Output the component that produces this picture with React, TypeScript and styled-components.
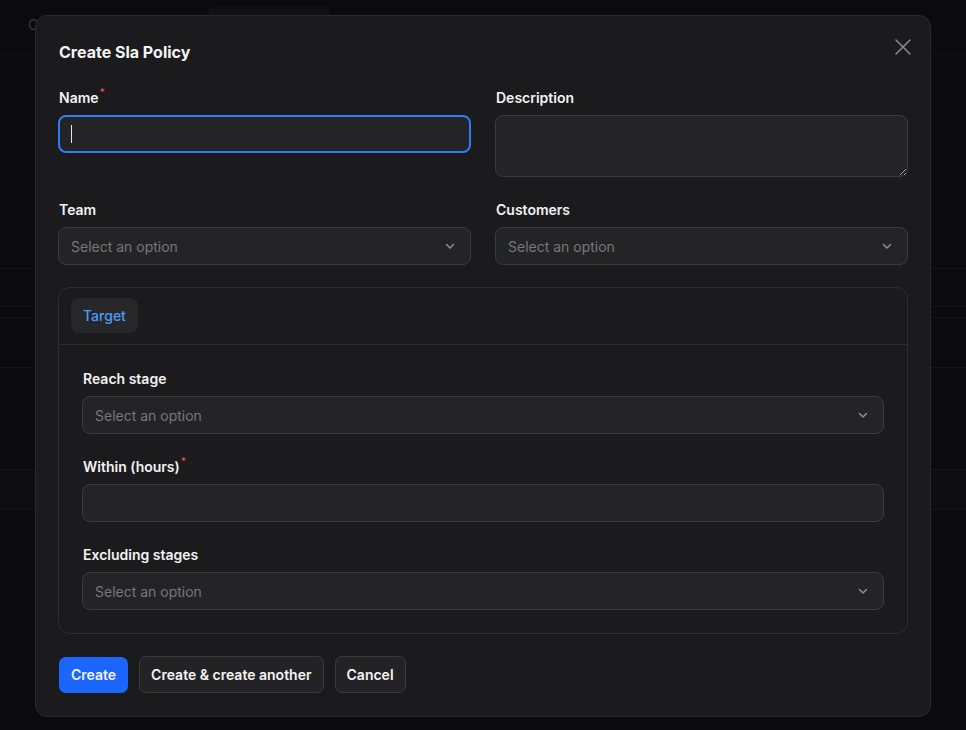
import styled, { createGlobalStyle } from "styled-components";

const GlobalStyle = createGlobalStyle`
    html, body {
        margin: 0;
        padding: 0;
        background: #0b0b0d;
        font-family: Inter, "Noto Sans", "Liberation Sans", sans-serif;
        color: #f2f2f3;
    }
    * {
        box-sizing: border-box;
    }
`;

/* faded page behind the dialog */
const Backdrop = styled.div`
    height: 100vh;
    width: 100%;
    display: flex;
    flex-direction: column;
    overflow: hidden;
`;
const TopBar = styled.div`
    height: 55px;
    display: flex;
    align-items: flex-start;
    gap: 170px;
    padding: 6px 0 0 28px;
    border-bottom: 1px solid #131315;
`;
const Crumb = styled.span`
    margin-top: 10px;
    font-size: 14px;
    color: #3a3a3e;
`;
const Pill = styled.div`
    width: 122px;
    height: 40px;
    border-radius: 8px;
    background: #111113;
`;
const BgRows = styled.div`
    display: flex;
    flex-direction: column;
    padding-top: 203px;
`;
const BgRow = styled.div<{ h: number; tone?: boolean }>`
    height: ${({ h }) => h}px;
    background: ${({ tone }) => (tone ? "#0e0e10" : "transparent")};
    border-bottom: 1px solid #151517;
`;

const Overlay = styled.div`
    position: fixed;
    inset: 0;
    padding-top: 2px;
    display: flex;
    align-items: center;
    justify-content: center;
`;
const Dialog = styled.div`
    width: 896px;
    height: 702px;
    background: #1b1b1d;
    border: 1px solid #2a2a2d;
    border-radius: 12px;
    padding: 24px 22px 23px;
    display: flex;
    flex-direction: column;
`;
const DialogHeader = styled.div`
    display: flex;
    align-items: flex-start;
    justify-content: space-between;
    height: 24px;
    margin-bottom: 24px;
    padding-left: 1px;
`;
const Title = styled.h2`
    margin: 0;
    font-size: 16px;
    line-height: 24px;
    font-weight: 700;
    color: #f4f4f5;
`;
const CloseButton = styled.button`
    border: none;
    background: none;
    padding: 0;
    margin: -4px -6px 0 0;
    width: 22px;
    height: 22px;
    display: flex;
    align-items: center;
    justify-content: center;
    cursor: pointer;
`;
const Grid = styled.div`
    display: grid;
    grid-template-columns: 1fr 1fr;
    column-gap: 24px;
    row-gap: 23px;
`;
const Field = styled.div`
    display: flex;
    flex-direction: column;
`;
const Label = styled.label`
    font-size: 14px;
    line-height: 20px;
    font-weight: 600;
    color: #f2f2f3;
    margin-bottom: 7px;
    padding-left: 1px;
`;
const Required = styled.sup`
    color: #e5484d;
    font-size: 10px;
    line-height: 0;
    margin-left: 1px;
    vertical-align: 7px;
`;
const InputBox = styled.div<{ focused?: boolean }>`
    position: relative;
    height: 38px;
    border-radius: 8px;
    background: #242427;
    border: ${({ focused }) =>
        focused ? "2px solid #2f7cf6" : "1px solid #3b3b3f"};
`;
const Input = styled.input`
    width: 100%;
    height: 100%;
    border: none;
    background: transparent;
    outline: none;
    padding: 0 12px;
    font: inherit;
    font-size: 14px;
    color: #f2f2f3;
`;
const Caret = styled.span`
    position: absolute;
    left: 11px;
    top: 8px;
    width: 1px;
    height: 18px;
    background: #e8e8ea;
`;
const TextArea = styled.textarea`
    height: 62px;
    border-radius: 8px;
    background: #242427;
    border: 1px solid #3b3b3f;
    padding: 8px 12px;
    font: inherit;
    font-size: 14px;
    color: #f2f2f3;
    outline: none;
    resize: vertical;
`;
const Select = styled.div`
    height: 38px;
    border-radius: 8px;
    background: #242427;
    border: 1px solid #3b3b3f;
    padding: 0 12px;
    display: flex;
    align-items: center;
    justify-content: space-between;
    font-size: 14px;
    color: #76767c;
    cursor: pointer;
`;
const TargetCard = styled.div`
    margin-top: 22px;
    border: 1px solid #2e2e31;
    border-radius: 12px;
    display: flex;
    flex-direction: column;
`;
const TabBar = styled.div`
    display: flex;
    padding: 10px 12px 11px;
    border-bottom: 1px solid #2e2e31;
`;
const Tab = styled.button<{ active?: boolean }>`
    height: 35px;
    padding: 0 12px;
    border: none;
    border-radius: 8px;
    background: ${({ active }) => (active ? "#27272a" : "transparent")};
    color: ${({ active }) => (active ? "#4a9bf7" : "#a1a1a8")};
    font: inherit;
    font-size: 14px;
    font-weight: 500;
    cursor: pointer;
`;
const TabBody = styled.div`
    padding: 24px 23px 23px;
    display: flex;
    flex-direction: column;
    gap: 23px;
`;
const Actions = styled.div`
    margin-top: auto;
    display: flex;
    align-items: center;
    gap: 11px;
    padding-left: 1px;
`;
const Button = styled.button<{ primary?: boolean }>`
    height: ${({ primary }) => (primary ? "36px" : "37px")};
    padding: 0 ${({ primary }) => (primary ? "12px" : "11px")};
    border-radius: 7px;
    border: ${({ primary }) => (primary ? "none" : "1px solid #3a3a3e")};
    background: ${({ primary }) => (primary ? "#1a66ff" : "#232326")};
    color: #f4f4f5;
    font: inherit;
    font-size: 14px;
    font-weight: 600;
    cursor: pointer;
`;

const Chevron = () => (
    <svg width="16" height="16" viewBox="0 0 16 16" fill="none">
        <path d="M4.5 6.5 8 10l3.5-3.5" stroke="#8b8b93" strokeWidth="1.6" strokeLinecap="round" strokeLinejoin="round" />
    </svg>
);

const CloseIcon = () => (
    <svg width="16" height="16" viewBox="0 0 16 16" fill="none">
        <path d="M1 1l14 14M15 1 1 15" stroke="#8a8a91" strokeWidth="1.5" strokeLinecap="round" />
    </svg>
);

const SelectField = ({ label }: { label: string }) => (
    <Field>
        <Label>{label}</Label>
        <Select>
            <span>Select an option</span>
            <Chevron />
        </Select>
    </Field>
);

const App = () => {
    return (
        <>
            <GlobalStyle />
            <Backdrop>
                <TopBar>
                    <Crumb>C</Crumb>
                    <Pill />
                </TopBar>
                <BgRows>
                    <BgRow h={11} />
                    <BgRow h={38} />
                    <BgRow h={11} />
                    <BgRow h={50} />
                    <BgRow h={102} />
                    <BgRow h={40} tone />
                </BgRows>
            </Backdrop>

            <Overlay>
                <Dialog>
                    <DialogHeader>
                        <Title>Create Sla Policy</Title>
                        <CloseButton aria-label="Close">
                            <CloseIcon />
                        </CloseButton>
                    </DialogHeader>

                    <Grid>
                        <Field>
                            <Label>
                                Name<Required>*</Required>
                            </Label>
                            <InputBox focused>
                                <Input />
                                <Caret />
                            </InputBox>
                        </Field>
                        <Field>
                            <Label>Description</Label>
                            <TextArea />
                        </Field>
                        <SelectField label="Team" />
                        <SelectField label="Customers" />
                    </Grid>

                    <TargetCard>
                        <TabBar>
                            <Tab active>Target</Tab>
                        </TabBar>
                        <TabBody>
                            <SelectField label="Reach stage" />
                            <Field>
                                <Label>
                                    Within (hours)<Required>*</Required>
                                </Label>
                                <InputBox>
                                    <Input />
                                </InputBox>
                            </Field>
                            <SelectField label="Excluding stages" />
                        </TabBody>
                    </TargetCard>

                    <Actions>
                        <Button primary>Create</Button>
                        <Button>Create &amp; create another</Button>
                        <Button>Cancel</Button>
                    </Actions>
                </Dialog>
            </Overlay>
        </>
    );
};

export default App;
